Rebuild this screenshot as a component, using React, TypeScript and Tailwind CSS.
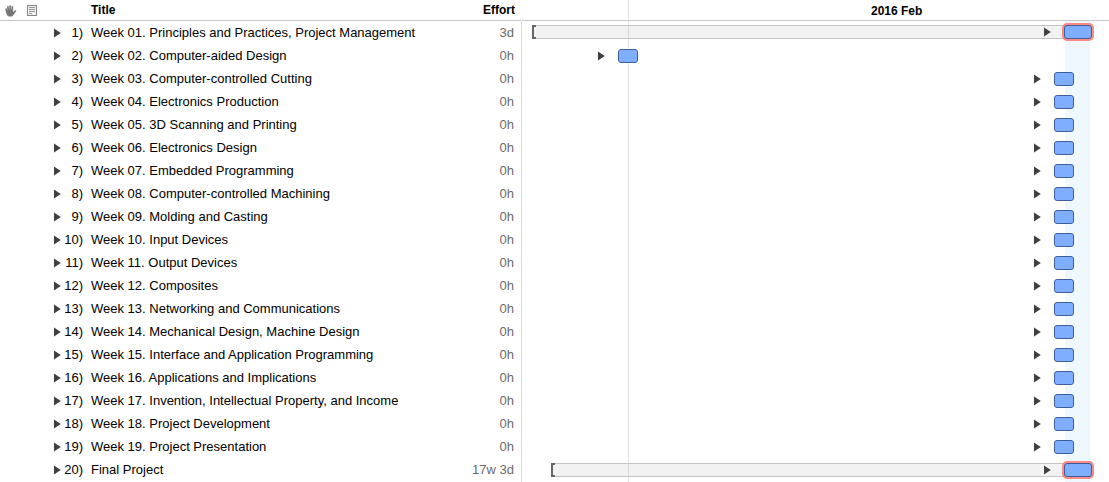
type Task = {
  title: string;
  effort: string;
  start: number;
  lead?: number;
};

const DEFAULT_START = 512;

const tasks: Task[] = [
  { title: "Week 01. Principles and Practices, Project Management", effort: "3d", start: 10, lead: 532 },
  { title: "Week 02. Computer-aided Design", effort: "0h", start: 76 },
  { title: "Week 03. Computer-controlled Cutting", effort: "0h", start: DEFAULT_START },
  { title: "Week 04. Electronics Production", effort: "0h", start: DEFAULT_START },
  { title: "Week 05. 3D Scanning and Printing", effort: "0h", start: DEFAULT_START },
  { title: "Week 06. Electronics Design", effort: "0h", start: DEFAULT_START },
  { title: "Week 07. Embedded Programming", effort: "0h", start: DEFAULT_START },
  { title: "Week 08. Computer-controlled Machining", effort: "0h", start: DEFAULT_START },
  { title: "Week 09. Molding and Casting", effort: "0h", start: DEFAULT_START },
  { title: "Week 10. Input Devices", effort: "0h", start: DEFAULT_START },
  { title: "Week 11. Output Devices", effort: "0h", start: DEFAULT_START },
  { title: "Week 12. Composites", effort: "0h", start: DEFAULT_START },
  { title: "Week 13. Networking and Communications", effort: "0h", start: DEFAULT_START },
  { title: "Week 14. Mechanical Design, Machine Design", effort: "0h", start: DEFAULT_START },
  { title: "Week 15. Interface and Application Programming", effort: "0h", start: DEFAULT_START },
  { title: "Week 16. Applications and Implications", effort: "0h", start: DEFAULT_START },
  { title: "Week 17. Invention, Intellectual Property, and Income", effort: "0h", start: DEFAULT_START },
  { title: "Week 18. Project Development", effort: "0h", start: DEFAULT_START },
  { title: "Week 19. Project Presentation", effort: "0h", start: DEFAULT_START },
  { title: "Final Project", effort: "17w 3d", start: 29, lead: 513 },
];

function Triangle() {
  return (
    <svg width="7" height="10" viewBox="0 0 7 10" className="block shrink-0" aria-hidden="true">
      <path d="M0 0.5 L6.8 5 L0 9.5 Z" fill="#404040" />
    </svg>
  );
}

function HandIcon() {
  return (
    <svg width="12" height="12" viewBox="0 0 12 12" className="block" aria-hidden="true">
      <g stroke="#777" strokeWidth="1.7" strokeLinecap="round" fill="none">
        <path d="M1.1 4 L1.8 7" />
        <path d="M2.9 1.9 L3.4 6" />
        <path d="M5.1 1 L5.2 6" />
        <path d="M7.4 1.9 L7 6" />
      </g>
      <path
        d="M1 5 L8 4.6 L8.2 7 L10.2 5.3 Q11.4 4.9 11.3 6 L8.8 9.4 C8 10.9 7 11.6 5.2 11.6 C3 11.6 1.8 10.4 1.4 8.4 Z"
        fill="#777"
      />
    </svg>
  );
}

function NoteIcon() {
  return (
    <svg width="10" height="11" viewBox="0 0 10 11" className="block" aria-hidden="true">
      <rect x="0.5" y="0.5" width="9" height="10" fill="#f0f0f0" stroke="#858585" />
      <path d="M2 2.5H8M2 4.5H8M2 6.5H8M2 8.5H5" stroke="#999" />
    </svg>
  );
}

function Outline() {
  return (
    <table className="w-[521px] shrink-0 table-fixed border-collapse self-start">
      <colgroup>
        <col className="w-[23px]" />
        <col className="w-[31px]" />
        <col className="w-[37px]" />
        <col />
        <col className="w-[80px]" />
      </colgroup>
      <thead>
        <tr className="h-[21px] text-xs font-bold shadow-[inset_0_-1px_0_#c8c8c8]">
          <th className="p-0 pl-[5px] align-middle" aria-label="Violations">
            <HandIcon />
          </th>
          <th className="p-0 pl-1 align-middle" aria-label="Notes">
            <NoteIcon />
          </th>
          <th className="p-0" aria-label="Number" />
          <th className="p-0 text-left align-top leading-5">Title</th>
          <th className="p-0 pr-1.5 text-right align-top leading-5">Effort</th>
        </tr>
      </thead>
      <tbody>
        {tasks.map((task, i) => (
          <tr key={task.title} className="h-[23px] leading-[23px]">
            <td className="p-0" />
            <td className="p-0" colSpan={2}>
              <div className="flex items-center justify-between pr-2 pl-[31px]">
                <button type="button" aria-label={`Expand ${task.title}`}>
                  <Triangle />
                </button>
                <span>{i + 1})</span>
              </div>
            </td>
            <td className="p-0 whitespace-nowrap">{task.title}</td>
            <td className="p-0 pr-[7px] text-right whitespace-nowrap text-[#6a6a6a]">{task.effort}</td>
          </tr>
        ))}
      </tbody>
    </table>
  );
}

function TimelineRow({ task }: { task: Task }) {
  if (task.lead !== undefined) {
    return (
      <div className="flex h-[23px] items-start pt-[5px] first:pt-1">
        <div style={{ width: task.start }} className="shrink-0" />
        <div
          style={{ width: task.lead }}
          className="flex h-3.5 shrink-0 items-center justify-between border-y border-[#c4c4c4] bg-black/5"
        >
          <div className="-my-px h-3.5 w-1 border-y-2 border-l-2 border-[#666]" />
          <div className="pr-[13px]">
            <Triangle />
          </div>
        </div>
        <div className="h-3.5 w-7 shrink-0 rounded-[3px] border border-[#3d5f9c] bg-[#80aeff] shadow-[0_0_0_2px_#ff8a85]" />
      </div>
    );
  }
  return (
    <div className="flex h-[23px] items-start pt-[5px]">
      <div style={{ width: task.start }} className="shrink-0" />
      <div className="flex h-3.5 items-center gap-[13px]">
        <Triangle />
        <div className="h-3.5 w-5 shrink-0 rounded-[3px] border border-[#3d5f9c] bg-[#80aeff]" />
      </div>
    </div>
  );
}

function Timeline() {
  return (
    <section aria-label="Timeline" className="relative min-w-0 flex-1 overflow-hidden">
      <div className="absolute top-[21px] bottom-0 left-[543px] w-[25px] bg-[#eff7ff]" />
      <div className="absolute inset-y-0 left-[106px] w-px bg-[#e2e2e2]" />
      <div className="relative">
        <div className="h-[21px] border-b border-[#c8c8c8] pl-[349px] text-xs leading-[22px] font-bold">
          2016 Feb
        </div>
        <div>
          {tasks.map((task) => (
            <TimelineRow key={task.title} task={task} />
          ))}
        </div>
      </div>
    </section>
  );
}

export default function App() {
  return (
    <main className="flex min-h-screen overflow-hidden bg-white font-['Liberation_Sans',Arial,sans-serif] text-[13px] text-black">
      <Outline />
      <div className="mt-[21px] w-px shrink-0 bg-[#dedede]" />
      <Timeline />
    </main>
  );
}
